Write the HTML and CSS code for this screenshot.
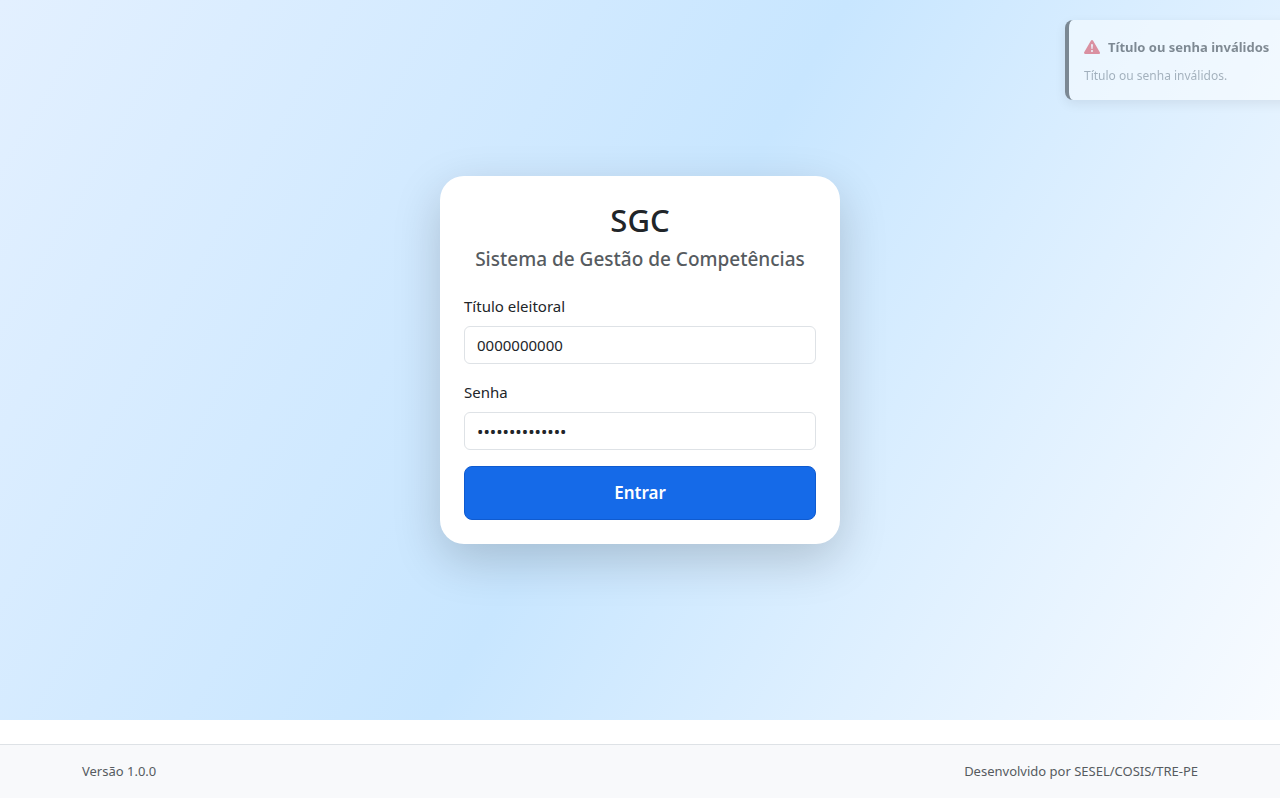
FILE: index.html
```html
<!DOCTYPE html>
<html lang="pt-BR">
<head>
  <meta charset="utf-8">
  <meta name="viewport" content="width=device-width, initial-scale=1">
  <title>SGC</title>
  <link rel="stylesheet" href="styles.css">
</head>
<body>
  <main class="login">
    <form class="card">
      <h1 class="card-title">SGC</h1>
      <h2 class="card-subtitle">Sistema de Gestão de Competências</h2>
      <div class="field">
        <label for="titulo">Título eleitoral</label>
        <input id="titulo" class="input" type="text" value="0000000000">
      </div>
      <div class="field">
        <label for="senha">Senha</label>
        <input id="senha" class="input input-password" type="password" value="senhaincorreta">
      </div>
      <button class="submit" type="button">Entrar</button>
    </form>
  </main>

  <footer class="footer">
    <div class="footer-inner">
      <span>Versão 1.0.0</span>
      <span>Desenvolvido por SESEL/COSIS/TRE-PE</span>
    </div>
  </footer>

  <div class="toast" role="alert">
    <div class="toast-title">
      <svg class="toast-icon" viewBox="0 0 16 16" aria-hidden="true">
        <path fill="currentColor" d="M8.982 1.566a1.13 1.13 0 0 0-1.96 0L.165 13.233c-.457.778.091 1.767.98 1.767h13.713c.889 0 1.438-.99.98-1.767zM8 5c.535 0 .954.462.9.995l-.35 3.507a.552.552 0 0 1-1.1 0L7.1 5.995A.905.905 0 0 1 8 5m.002 6a1 1 0 1 1 0 2 1 1 0 0 1 0-2"/>
      </svg>
      <strong>Título ou senha inválidos</strong>
    </div>
    <p class="toast-text">Título ou senha inválidos.</p>
  </div>
</body>
</html>
```
FILE: styles.css
```css
* {
  box-sizing: border-box;
}

body {
  margin: 0;
  min-height: 100vh;
  display: flex;
  flex-direction: column;
  overflow-x: hidden;
  background: #fff;
  color: #212529;
  font-family: "Segoe UI", "Noto Sans", sans-serif;
  font-size: 15px;
  line-height: 24px;
}

.login {
  flex: 1;
  display: flex;
  align-items: center;
  justify-content: center;
  padding: 24px;
  background: linear-gradient(120deg, #e3f0ff 0%, #c8e6ff 50%, #f8fbff 100%);
}

.card {
  width: 100%;
  max-width: 400px;
  padding: 24px;
  border-radius: 24px;
  background: #fff;
  box-shadow: 0 16px 48px rgba(0, 0, 0, 0.18);
}

.card-title {
  margin: 0 0 8px;
  font-size: 31px;
  font-weight: 500;
  line-height: 40px;
  text-align: center;
}

.card-subtitle {
  margin: 0 0 24px;
  color: #565b60;
  font-size: 19px;
  font-weight: 500;
  line-height: 22px;
  text-align: center;
}

.field {
  display: flex;
  flex-direction: column;
  gap: 8px;
  margin-bottom: 16px;
}

.input {
  width: 100%;
  height: 38px;
  padding: 6px 12px;
  border: 1px solid #dee2e6;
  border-radius: 6px;
  background: #fff;
  color: #212529;
  font: inherit;
}

.input-password {
  font-size: 17px;
}

.submit {
  display: block;
  width: 100%;
  padding: 14px 12px;
  border: 1px solid #0f5bd0;
  border-radius: 8px;
  background: #156ae8;
  color: #fff;
  font: inherit;
  font-size: 17px;
  font-weight: 600;
}

.footer {
  margin-top: 24px;
  padding: 16px 0;
  border-top: 1px solid #dee2e6;
  background: #f8f9fb;
  color: #565b60;
  font-size: 13px;
  line-height: 21px;
}

.footer-inner {
  display: flex;
  justify-content: space-between;
  max-width: 1140px;
  margin: 0 auto;
  padding: 0 12px;
}

.toast {
  position: fixed;
  top: 20px;
  right: -105px;
  width: 320px;
  padding: 15px;
  border-left: 4px solid #212529;
  border-radius: 8px;
  background: #fff;
  box-shadow: 0 4px 12px rgba(0, 0, 0, 0.15);
  opacity: 0.5;
  font-size: 13px;
}

.toast-title {
  display: flex;
  align-items: center;
  gap: 8px;
  margin-bottom: 8px;
}

.toast-icon {
  width: 16px;
  height: 16px;
  color: #dc3545;
}

.toast-text {
  margin: 0;
  color: #6c757d;
  font-size: 12px;
  line-height: 18px;
}
```
